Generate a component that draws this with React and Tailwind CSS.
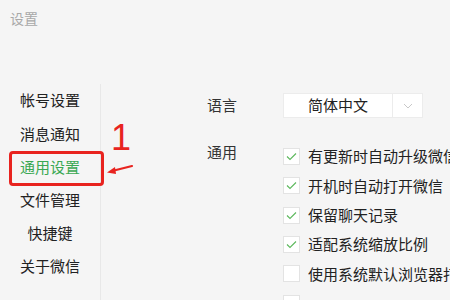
import React from 'react';

const font = { fontFamily: '"Noto Sans CJK SC", "Noto Sans", sans-serif' };

const navItems = ['帐号设置', '消息通知', '通用设置', '文件管理', '快捷键', '关于微信'];

const options = [
  { label: '有更新时自动升级微信', checked: true },
  { label: '开机时自动打开微信', checked: true },
  { label: '保留聊天记录', checked: true },
  { label: '适配系统缩放比例', checked: true },
  { label: '使用系统默认浏览器打开网页', checked: false },
  { label: '', checked: false },
];

const CheckBox = ({ checked }) => (
  <div className="w-[17px] h-[17px] bg-white border border-[#e3e3e3] flex items-center justify-center shrink-0">
    {checked && (
      <svg width="11" height="9" viewBox="0 0 11 9" fill="none">
        <path d="M1 4.5 L4 7.5 L10 1.5" stroke="#5cb85c" strokeWidth="1.1" />
      </svg>
    )}
  </div>
);

export default function App() {
  return (
    <div className="relative w-[450px] h-[300px] overflow-hidden bg-[#f5f5f5] text-[#333]" style={font}>
      <div className="h-[84px] pl-[10px] pt-[8px] text-[14px] text-[#a8a8a8] leading-[20px]">设置</div>
      <div className="flex">
        <div className="w-[101px] shrink-0 border-r border-[#e8e8e8] h-[216px]">
          {navItems.map((item) => (
            <div
              key={item}
              className={`h-[33.2px] flex items-center justify-center whitespace-nowrap text-[15px] ${item === '通用设置' ? 'text-[#3aa853]' : 'text-[#222]'}`}
            >
              {item}
            </div>
          ))}
        </div>
        <div className="flex-1 min-w-0 overflow-hidden pl-[106px] pt-[9px]">
          <div className="flex items-center h-[25px]">
            <div className="w-[76px] shrink-0 text-[15px]">语言</div>
            <div className="flex h-[25px] w-[140px] shrink-0 bg-white border border-[#ececec]">
              <div className="w-[108px] flex items-center justify-center text-[15px] text-[#222]">简体中文</div>
              <div className="flex-1 border-l border-[#ececec] flex items-center justify-center">
                <svg width="10" height="6" viewBox="0 0 10 6" fill="none">
                  <path d="M1 1 L5 5 L9 1" stroke="#c8c8c8" strokeWidth="1" />
                </svg>
              </div>
            </div>
          </div>
          <div className="flex mt-[24px]">
            <div className="w-[76px] shrink-0 text-[15px] leading-[20px]">通用</div>
            <div className="flex flex-col">
              {options.map((o, i) => (
                <div key={i} className="h-[29.3px] flex items-center gap-[8px] whitespace-nowrap">
                  <CheckBox checked={o.checked} />
                  <span className="text-[15px] text-[#222]">{o.label}</span>
                </div>
              ))}
            </div>
          </div>
        </div>
      </div>

      {/* red annotation */}
      <div className="absolute left-[9px] top-[151px] w-[95px] h-[35px] border-[3px] border-[#e8231f] rounded-[4px]" />
      <div className="absolute left-[111px] top-[118px] text-[36px] leading-[40px] text-[#e8231f]" style={{ fontFamily: '"Liberation Sans", sans-serif' }}>1</div>
      <svg className="absolute left-[104px] top-[162px]" width="30" height="16" viewBox="0 0 30 16">
        <path d="M28 4 L8 9" stroke="#e8231f" strokeWidth="2.2" strokeLinecap="round" />
        <path d="M3 10.5 L11 5 L12 12 Z" fill="#e8231f" />
      </svg>
    </div>
  );
}
